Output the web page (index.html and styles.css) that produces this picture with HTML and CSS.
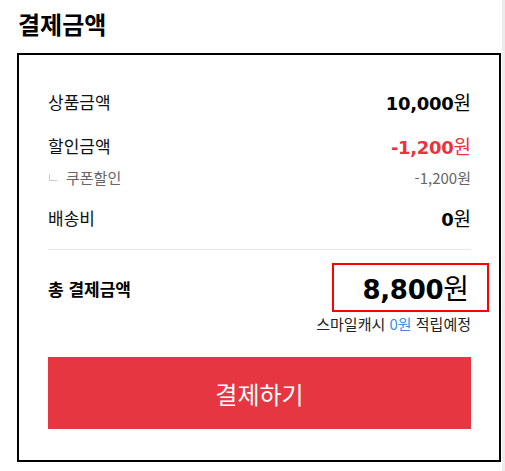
FILE: index.html
```html
<!DOCTYPE html>
<html lang="ko">
<head>
    <meta charset="UTF-8">
    <meta name="viewport" content="width=device-width, initial-scale=1.0">
    <title>결제금액</title>
    <link rel="stylesheet" href="styles.css">
</head>
<body>
    <div class="page">
        <div class="content">
            <h2 class="title">결제금액</h2>

            <div class="pay-box">
                <div class="row">
                    <span class="label">상품금액</span>
                    <span class="price"><b class="num">10,000</b>원</span>
                </div>
                <div class="row row-gap">
                    <span class="label">할인금액</span>
                    <span class="price discount"><b class="num">-1,200</b>원</span>
                </div>
                <div class="sub-row">
                    <span class="sub-label">쿠폰할인</span>
                    <span class="sub-price">-1,200원</span>
                </div>
                <div class="row row-gap">
                    <span class="label">배송비</span>
                    <span class="price"><b class="num">0</b>원</span>
                </div>

                <div class="divider"></div>

                <div class="total-row">
                    <span class="total-label">총 결제금액</span>
                    <span class="total-price"><b class="num">8,800</b>원</span>
                </div>
                <p class="cash-note">스마일캐시 <span class="cash">0원</span> 적립예정</p>

                <button class="pay-btn">결제하기</button>
            </div>
        </div>
        <div class="scroll-track"></div>
    </div>
</body>
</html>
```

FILE: styles.css
```css
body {
    margin: 0;
    font-family: "Noto Sans CJK KR", "Noto Sans", sans-serif;
    color: #111;
    background-color: #fff;
}
.page {
    display: flex;
    height: 471px;
}
.content {
    width: 502px;
}
.scroll-track {
    width: 3px;
    background-color: #ececec;
}
.title {
    margin: 0;
    height: 53px;
    padding-left: 18px;
    font-size: 24px;
    font-weight: 700;
    line-height: 48px;
    color: #000;
}
.pay-box {
    margin-left: 17px;
    width: 423px;
    padding: 32px 28px 31px 29px;
    border: 2px solid #000;
}
.row,
.sub-row,
.total-row {
    display: flex;
    justify-content: space-between;
    align-items: center;
}
.row {
    height: 28px;
    font-size: 17px;
}
.row-gap {
    margin-top: 16px;
}
.label {
    color: #111;
}
.price {
    font-size: 19px;
    color: #000;
}
.num {
    font-family: "DejaVu Sans", sans-serif;
    font-weight: 700;
    font-size: 18px;
    letter-spacing: -0.3px;
}
.discount {
    color: #e8343f;
}
.sub-row {
    height: 20px;
    margin-top: 8px;
    font-size: 15px;
    color: #666;
}
.sub-label::before {
    content: "";
    display: inline-block;
    width: 7px;
    height: 6px;
    margin: 0 9px 0 1px;
    border-left: 1px solid #ccc;
    border-bottom: 1px solid #ccc;
    vertical-align: 3px;
}
.divider {
    margin-top: 18px;
    height: 1px;
    background-color: #e6e6e6;
}
.total-row {
    height: 36px;
    margin-top: 20px;
}
.total-label {
    font-size: 17px;
    font-weight: 700;
    color: #000;
}
.total-price {
    position: relative;
    font-size: 28px;
    color: #000;
    line-height: 36px;
    padding-right: 2px;
}
.total-price .num {
    font-size: 26px;
}
.total-price::after {
    content: "";
    position: absolute;
    top: -6px;
    bottom: -4px;
    left: -30px;
    right: -18px;
    border: 2px solid #ff0000;
}
.cash-note {
    margin: 8px 0 0;
    height: 20px;
    line-height: 20px;
    font-size: 15px;
    text-align: right;
    color: #222;
}
.cash {
    color: #3b8ee6;
}
.pay-btn {
    display: block;
    width: 100%;
    height: 72px;
    margin-top: 23px;
    border: none;
    background-color: #e63641;
    color: #fff;
    font-family: "Noto Sans CJK KR", "Noto Sans", sans-serif;
    font-size: 24px;
    cursor: pointer;
}
```
